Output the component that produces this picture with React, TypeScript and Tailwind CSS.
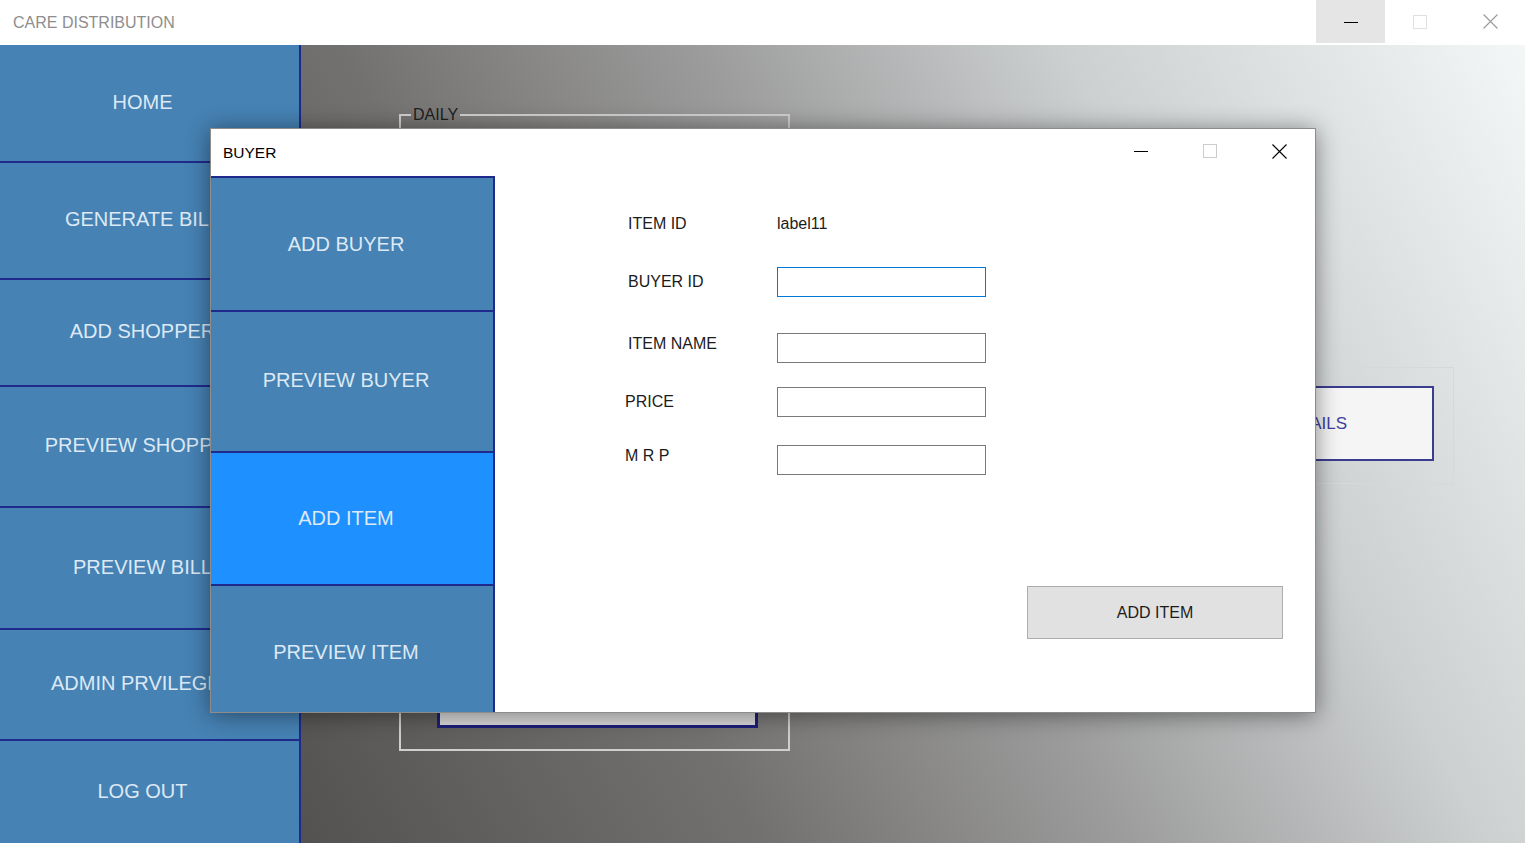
import React from "react";

const mainMenu = [
  { label: "HOME", h: "h-[116px]" },
  { label: "GENERATE BILL", h: "h-[117px]" },
  { label: "ADD SHOPPER", h: "h-[107px]" },
  { label: "PREVIEW SHOPPER", h: "h-[121px]" },
  { label: "PREVIEW BILL", h: "h-[122px]" },
  { label: "ADMIN PRVILEGES", h: "h-[111px]" },
  { label: "LOG OUT", h: "h-[104px]" },
];

const buyerMenu = [
  { label: "ADD BUYER", h: "h-[133px]", pad: "pb-[0px]", active: false },
  { label: "PREVIEW BUYER", h: "h-[141px]", pad: "pb-[4px]", active: false },
  { label: "ADD ITEM", h: "h-[134px]", pad: "pb-[2px]", active: true },
  { label: "PREVIEW ITEM", h: "h-[128px]", pad: "pt-[6px]", active: false },
];

const MinIcon = ({ color = "#000" }: { color?: string }) => (
  <svg width="14" height="14" viewBox="0 0 14 14">
    <line x1="0" y1="7.5" x2="14" y2="7.5" stroke={color} strokeWidth="1" />
  </svg>
);

const MaxIcon = ({ color = "#ccc" }: { color?: string }) => (
  <svg width="14" height="14" viewBox="0 0 14 14">
    <rect x="0.5" y="0.5" width="13" height="13" fill="none" stroke={color} strokeWidth="1" />
  </svg>
);

const CloseIcon = ({ color = "#000" }: { color?: string }) => (
  <svg width="15" height="15" viewBox="0 0 15 15">
    <path d="M0.5 0.5 L14.5 14.5 M14.5 0.5 L0.5 14.5" stroke={color} strokeWidth="1.1" />
  </svg>
);

const Field = ({ focused = false }: { focused?: boolean }) => (
  <div
    className={`w-[209px] h-[30px] bg-white border ${
      focused ? "border-[#0078d7]" : "border-[#7a7a7a]"
    }`}
  />
);

const BuyerDialog = () => (
  <div className="absolute left-[210px] top-[128px] w-[1106px] h-[585px] flex flex-col bg-white border border-[#8c8c8c] shadow-[0_2px_22px_rgba(0,0,0,0.45)]">
    {/* title bar */}
    <div className="h-[47px] flex items-center justify-between pl-[12px]">
      <span className="text-[15.5px] text-black">BUYER</span>
      <div className="flex items-center h-full pb-[3px]">
        <div className="w-[69px] h-full flex items-center justify-center">
          <MinIcon />
        </div>
        <div className="w-[69px] h-full flex items-center justify-center">
          <MaxIcon />
        </div>
        <div className="w-[71px] h-full flex items-center justify-center">
          <CloseIcon />
        </div>
      </div>
    </div>

    <div className="flex flex-1 min-h-0">
      {/* side menu */}
      <div className="w-[284px] flex flex-col border-t-2 border-r-2 border-[#1f2a8c]">
        {buyerMenu.map((item, i) => (
          <div
            key={item.label}
            className={`${item.h} ${item.pad} flex items-center justify-center pr-[12px] text-[20px] text-[#dde9f4] ${
              item.active ? "bg-[#1e90ff]" : "bg-[#4682b4]"
            } ${i > 0 ? "border-t-2 border-[#1f2a8c]" : ""}`}
          >
            {item.label}
          </div>
        ))}
      </div>

      {/* form */}
      <div className="flex-1 flex flex-col pl-[133px] pr-[32px] text-[16px] text-[#1c1c1c]">
        <div className="flex items-center h-[30px] mt-[33px]">
          <span className="w-[149px]">ITEM ID</span>
          <span>label11</span>
        </div>
        <div className="flex items-start mt-[28px]">
          <span className="w-[149px] pt-[3px]">BUYER ID</span>
          <Field focused />
        </div>
        <div className="flex items-start mt-[36px]">
          <span className="w-[149px] -mt-[1px]">ITEM NAME</span>
          <Field />
        </div>
        <div className="flex items-start mt-[24px]">
          <span className="w-[149px] -ml-[3px] mr-[3px] pt-[3px]">PRICE</span>
          <Field />
        </div>
        <div className="flex items-start mt-[28px]">
          <span className="w-[149px] -ml-[3px] mr-[3px] -mt-[1px]">M R P</span>
          <Field />
        </div>
        <div className="flex justify-end mt-[111px]">
          <button className="w-[256px] h-[53px] bg-[#e1e1e1] border border-[#adadad] text-[16px] text-[#1c1c1c]">
            ADD ITEM
          </button>
        </div>
      </div>
    </div>
  </div>
);

export default function App() {
  return (
    <div className="relative w-[1525px] h-[843px] overflow-hidden flex flex-col bg-white font-['Liberation_Sans',Arial,sans-serif]">
      {/* main title bar */}
      <div className="h-[45px] flex items-center justify-between pl-[13px]">
        <span className="text-[16px] text-[#8e8e8e]">CARE DISTRIBUTION</span>
        <div className="flex h-full">
          <div className="w-[69px] h-[43px] bg-[#e5e5e5] flex items-center justify-center">
            <MinIcon />
          </div>
          <div className="w-[70px] h-[43px] flex items-center justify-center">
            <MaxIcon color="#e0e0e0" />
          </div>
          <div className="w-[70px] h-[43px] flex items-center justify-center">
            <CloseIcon color="#999" />
          </div>
        </div>
      </div>

      <div className="flex flex-1 min-h-0">
        {/* main side menu */}
        <div className="w-[301px] flex flex-col border-r-2 border-[#1f2a8c] bg-[#4682b4]">
          {mainMenu.map((item, i) => (
            <div
              key={item.label}
              className={`${item.h} flex items-center justify-center pr-[14px] pb-[3px] text-[20px] text-[#dde9f4] whitespace-nowrap ${
                i > 0 ? "border-t-2 border-[#1f2a8c]" : ""
              }`}
            >
              {item.label}
            </div>
          ))}
        </div>

        {/* workspace */}
        <div className="flex-1 flex items-start bg-[linear-gradient(62deg,#545251_0%,#73716f_28%,#9c9c9c_50%,#cdd0d1_72%,#f4f7f8_100%)]">
          <fieldset className="ml-[98px] mt-[58px] w-[391px] h-[648px] border-2 border-[#cfcfcf] flex flex-col justify-end">
            <legend className="ml-[10px] px-[2px] text-[16px] text-[#1e1e1e]">DAILY</legend>
            <div className="pl-[36px] pb-[21px]">
              <div className="w-[321px] h-[100px] bg-[linear-gradient(#ececec,#d9d9d9)] border-[3px] border-[#1c1f78]" />
            </div>
          </fieldset>

          <div className="ml-[90px] mt-[322px] w-[574px] h-[117px] border border-[#d6d8d9] pt-[18px] pr-[19px] flex justify-end">
            <div className="w-[470px] h-[75px] bg-[#f5f5f5] border-2 border-[#3c3c8e] flex items-center justify-end pr-[85px] text-[17px] text-[#40409e]">
              VIEW DETAILS
            </div>
          </div>
        </div>
      </div>

      <BuyerDialog />
    </div>
  );
}
